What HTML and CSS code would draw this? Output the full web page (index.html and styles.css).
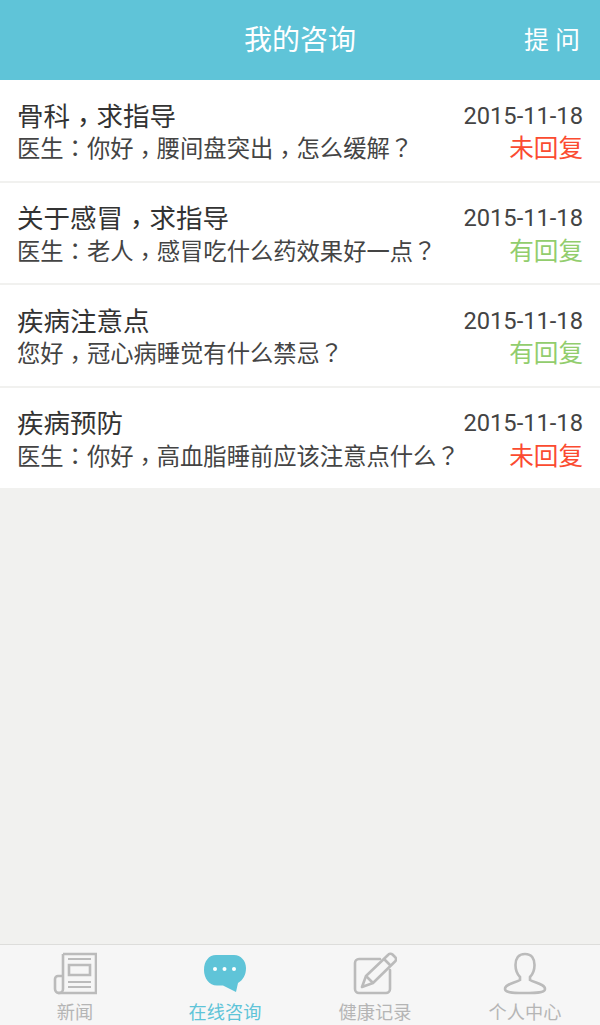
FILE: index.html
```html
<!DOCTYPE html>
<html>
<head>
    <meta charset="UTF-8">
    <meta name="viewport" content="width=device-width, initial-scale=1.0">
    <title>我的咨询</title>
    <link rel="stylesheet" href="styles.css">
</head>
<body>
<div class="page">
    <header class="topbar">
        <h1 class="topbar-title">我的咨询</h1>
        <span class="topbar-action"><span>提</span><span>问</span></span>
    </header>

    <main class="list">
        <div class="item">
            <div class="item-line">
                <span class="item-title">骨科<span class="mark comma">，</span>求指导</span>
                <span class="item-date">2015-11-18</span>
            </div>
            <div class="item-line">
                <span class="item-text">医生<span class="mark">：</span>你好<span class="mark comma">，</span>腰间盘突出<span class="mark comma">，</span>怎么缓解<span class="mark">？</span></span>
                <span class="status status-none">未回复</span>
            </div>
        </div>
        <div class="item">
            <div class="item-line">
                <span class="item-title">关于感冒<span class="mark comma">，</span>求指导</span>
                <span class="item-date">2015-11-18</span>
            </div>
            <div class="item-line">
                <span class="item-text">医生<span class="mark">：</span>老人<span class="mark comma">，</span>感冒吃什么药效果好一点<span class="mark">？</span></span>
                <span class="status status-done">有回复</span>
            </div>
        </div>
        <div class="item">
            <div class="item-line">
                <span class="item-title">疾病注意点</span>
                <span class="item-date">2015-11-18</span>
            </div>
            <div class="item-line">
                <span class="item-text">您好<span class="mark comma">，</span>冠心病睡觉有什么禁忌<span class="mark">？</span></span>
                <span class="status status-done">有回复</span>
            </div>
        </div>
        <div class="item">
            <div class="item-line">
                <span class="item-title">疾病预防</span>
                <span class="item-date">2015-11-18</span>
            </div>
            <div class="item-line">
                <span class="item-text">医生<span class="mark">：</span>你好<span class="mark comma">，</span>高血脂睡前应该注意点什么<span class="mark">？</span></span>
                <span class="status status-none">未回复</span>
            </div>
        </div>
    </main>

    <nav class="tabs">
        <div class="tab">
            <svg class="tab-icon" viewBox="0 0 44 44" fill="none" stroke="#bbb" stroke-width="2.6">
                <path d="M10 2H43V41H5"/>
                <path d="M10 2V37a4 4 0 0 1-4 4a4 4 0 0 1-4-4V27a3 3 0 0 1 3-3H10"/>
                <path d="M15 7H38M15 30H38M15 35H38" stroke-width="2"/>
                <path d="M16 13H37V23H16Z"/>
            </svg>
            <span class="tab-label">新闻</span>
        </div>
        <div class="tab tab-active">
            <svg class="tab-icon" viewBox="0 0 44 44">
                <path d="M13 3H31C38 3 43 9 43 16C43 23 40 28 35 31L33 40L20 33.500H14C6 33.500 1 26 1 18C1 9 6 3 13 3Z" fill="#5fc4d8"/>
                <circle cx="12" cy="17" r="2" fill="#fff"/>
                <circle cx="21.500" cy="17" r="2" fill="#fff"/>
                <circle cx="31" cy="17" r="2" fill="#fff"/>
            </svg>
            <span class="tab-label">在线咨询</span>
        </div>
        <div class="tab">
            <svg class="tab-icon" viewBox="0 0 44 44" fill="none" stroke="#bbb" stroke-width="2.6" stroke-linejoin="round">
                <path d="M27 7H6a4 4 0 0 0-4 4V37a4 4 0 0 0 4 4H33a4 4 0 0 0 4-4V18" stroke-linecap="round"/>
                <path d="M35 3a3 3 0 0 1 4.500-0.500l2.500 2.500a3 3 0 0 1 0 4.500L20 31L9 35L13 24Z"/>
                <path d="M31 7L38 14M13 24L20 31"/>
            </svg>
            <span class="tab-label">健康记录</span>
        </div>
        <div class="tab">
            <svg class="tab-icon" viewBox="0 0 44 44" fill="none" stroke="#bbb" stroke-width="2.6">
                <path d="M22 2C15 2 12.500 7 12.500 13C12.500 19 15 23 17 25V28C12 31 2 32 2 37C2 40 7 41 22 41S42 40 42 37C42 32 32 31 27 28V25C29 23 31.500 19 31.500 13C31.500 7 29 2 22 2Z"/>
            </svg>
            <span class="tab-label">个人中心</span>
        </div>
    </nav>
</div>
</body>
</html>
```

FILE: styles.css
```css
* {
    box-sizing: border-box;
}
html, body {
    margin: 0;
    padding: 0;
}
body {
    font-family: Roboto, "Noto Sans CJK SC", sans-serif;
    background-color: #f1f1ef;
}
.page {
    display: flex;
    flex-direction: column;
    height: 1025px;
    overflow: hidden;
}
.topbar {
    position: relative;
    display: flex;
    align-items: center;
    justify-content: center;
    flex: none;
    height: 80px;
    padding-top: 2px;
    background-color: #5fc4d8;
    color: #fff;
}
.topbar-title {
    margin: 0;
    font-size: 28px;
    font-weight: 400;
    line-height: 1;
}
.topbar-action {
    position: absolute;
    right: 20px;
    top: 28px;
    display: flex;
    gap: 6px;
    font-size: 25px;
    line-height: 1;
}
.list {
    flex: 1;
}
.item {
    height: 102.500px;
    padding: 19.500px 17px 0;
    background-color: #fff;
    border-bottom: 2px solid #f1f1ef;
}
.item:last-child {
    height: 100.500px;
    border-bottom: none;
}
.item-line {
    display: flex;
    align-items: center;
    justify-content: space-between;
}
.item-line + .item-line {
    margin-top: 0.500px;
}
/* the traditional cut centres punctuation in its box */
.mark {
    font-family: "Noto Sans CJK TC", sans-serif;
    line-height: 1;
}
/* and sits the comma mid-height, so drop it to the baseline */
.comma {
    position: relative;
    top: 0.24em;
}
.item-title {
    font-size: 26.500px;
    line-height: 34px;
    color: #333;
}
.item-date {
    position: relative;
    top: -1px;
    font-size: 23.700px;
    line-height: 30px;
    color: #444;
}
.item-text {
    font-size: 23.300px;
    line-height: 30px;
    color: #444;
}
.status {
    font-size: 24.600px;
    line-height: 30px;
}
.status-none {
    color: #fb4b30;
}
.status-done {
    color: #92cd6d;
}
.tabs {
    display: grid;
    grid-template-columns: repeat(4, 1fr);
    flex: none;
    height: 81px;
    background-color: #f6f6f6;
    border-top: 1px solid #dddddb;
}
.tab {
    display: flex;
    flex-direction: column;
    align-items: center;
    padding-top: 7px;
    color: #b5b5b5;
}
.tab-active {
    color: #5fc4d8;
}
.tab-icon {
    display: block;
    width: 44px;
    height: 44px;
}
.tab-label {
    margin-top: 5px;
    font-size: 18.200px;
    line-height: 24px;
}
```
